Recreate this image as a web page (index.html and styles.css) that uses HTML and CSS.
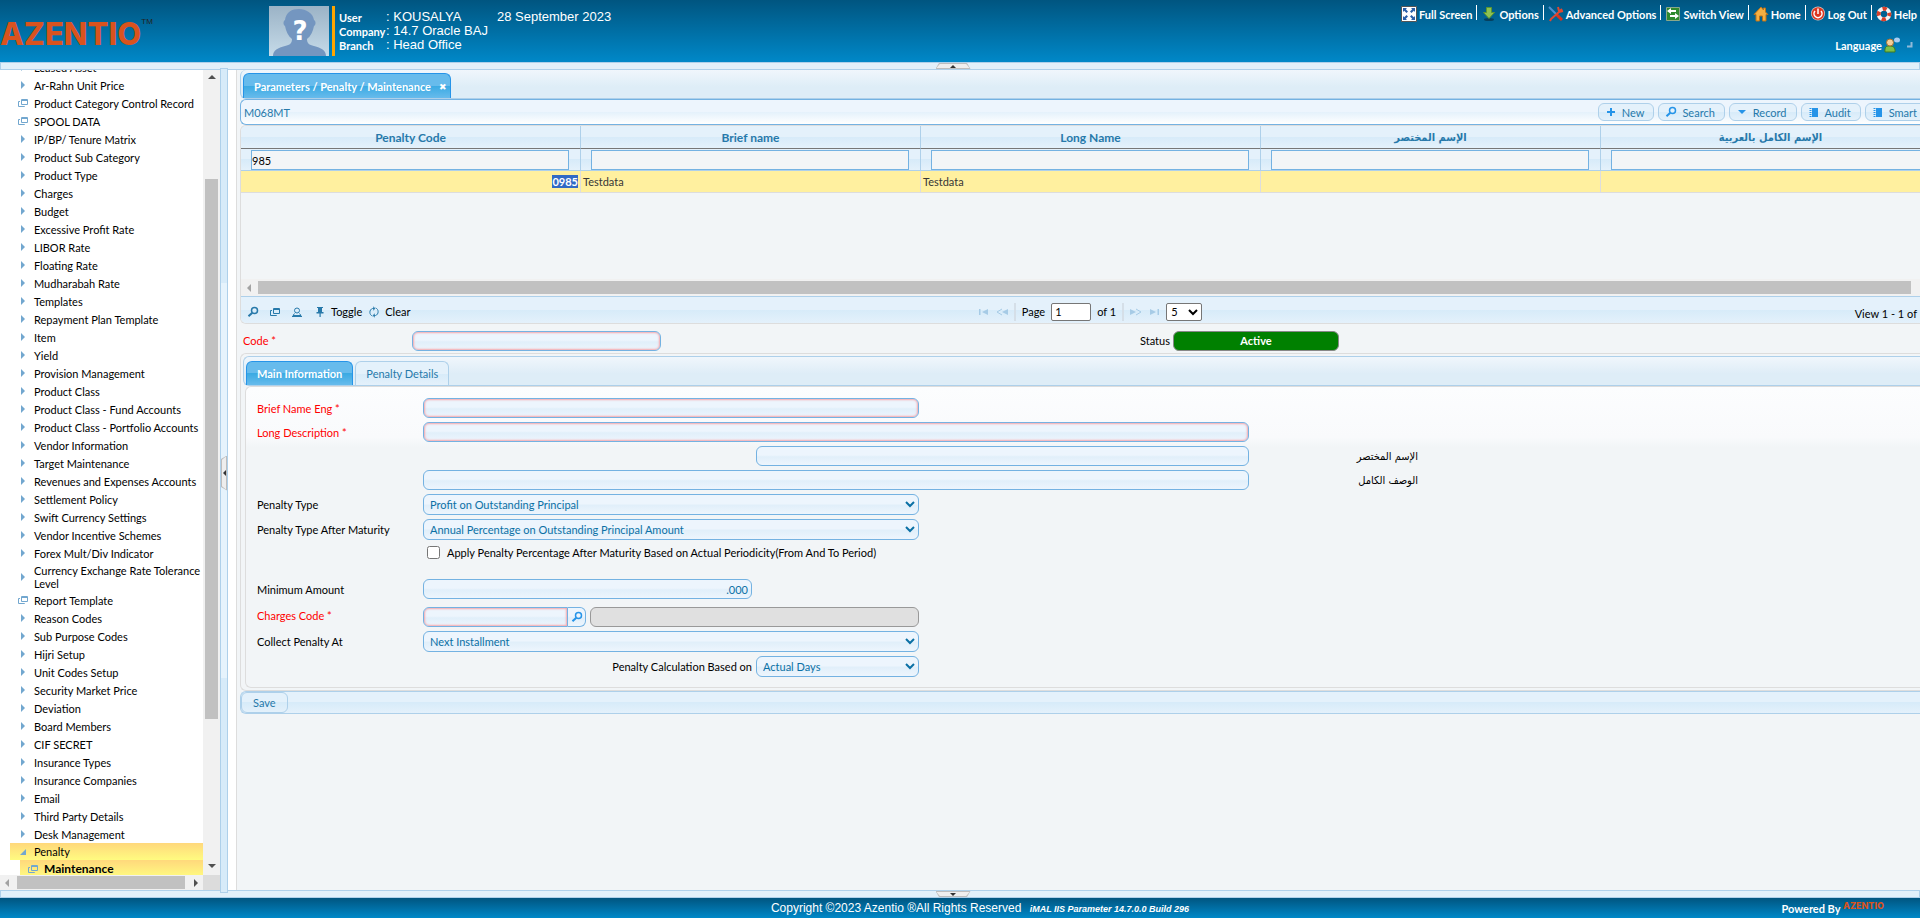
FILE: index.html
```html
<!DOCTYPE html>
<html lang="en">
<head>
<meta charset="utf-8">
<title>iMAL IIS Parameter - Penalty Maintenance</title>
<link rel="stylesheet" href="styles.css">
</head>
<body>
<svg class="sprite" aria-hidden="true">
  <symbol id="i-arrow" viewBox="0 0 10 10"><path d="M3 1v8l4-4z" fill="currentColor"/></symbol>
  <symbol id="i-open" viewBox="0 0 10 10"><path d="M8 2v6H2z" fill="currentColor"/></symbol>
  <symbol id="i-win" viewBox="0 0 10 10"><path d="M3.500 1.500h6v5h-6zM3.500 2.500h6M2 3.500H.5v5h6V8" fill="none" stroke="currentColor"/></symbol>
  <symbol id="i-search" viewBox="0 0 12 12"><circle cx="7.500" cy="4.500" r="3" fill="none" stroke="currentColor" stroke-width="1.500"/><path d="M5.300 6.700L1.500 10.300" stroke="currentColor" stroke-width="2"/></symbol>
  <symbol id="i-plus" viewBox="0 0 12 12"><path d="M6 2v8M2 6h8" stroke="currentColor" stroke-width="2"/></symbol>
  <symbol id="i-down" viewBox="0 0 12 12"><path d="M2 4h8L6 8z" fill="currentColor"/></symbol>
  <symbol id="i-book" viewBox="0 0 12 12"><path d="M4 2h6v9H4z" fill="currentColor"/><path d="M2.500 2v9" stroke="currentColor" stroke-width="2" stroke-dasharray="1 1"/></symbol>
  <symbol id="i-person" viewBox="0 0 12 12"><circle cx="6" cy="4.500" r="2.500" fill="none" stroke="currentColor"/><path d="M3.500 7.500L2 9.500h8L8.500 7.500M1 10.500h10" fill="none" stroke="currentColor"/></symbol>
  <symbol id="i-pin" viewBox="0 0 12 12"><path d="M3 1h6v1H8v4h1.500v1.500H2.500V6H4V2H3zM5.500 7.500h1.200V11H5.500z" fill="currentColor"/></symbol>
  <symbol id="i-refresh" viewBox="0 0 12 12"><path d="M4.500 10C1 9 1 3.500 4.500 2.500h2M7.500 2c3.500 1 3.500 6.500 0 7.500h-2M5 .8l2 1.700-2 1.700M7 7.800L5 9.500l2 1.700" fill="none" stroke="currentColor"/></symbol>
  <symbol id="i-first" viewBox="0 0 12 10"><path d="M1 2h1.500v6H1zM10 2v6L4 5z" fill="currentColor"/></symbol>
  <symbol id="i-prev" viewBox="0 0 12 10"><path d="M12 2v6L6 5z" fill="currentColor"/><path d="M6 2L1 5l5 3" fill="none" stroke="currentColor"/></symbol>
</svg>

<header class="top">
  <div class="logo">AZENTIO<sup>TM</sup></div>
  <svg class="photo" viewBox="0 0 60 50" role="img" aria-label="User photo">
    <defs><linearGradient id="pg" x1="0" y1="0" x2="0" y2="1"><stop offset="0" stop-color="#9bb3c6"/><stop offset="1" stop-color="#c6dbe9"/></linearGradient></defs>
    <path fill="url(#pg)" d="M0 0h60v50H0z"/>
    <path fill="#7496c0" d="M4 50c0-6 5-8 12-10 5-1 7-3 7-7-4-3-6-8-7-13-2-1-2-5 0-6C17 6 23 3 30 3s14 4 15 11c2 1 2 5 0 6-1 5-3 10-7 13 0 4 2 6 7 7 7 2 12 4 12 10z"/>
    <text x="31" y="34" text-anchor="middle" class="qmark">?</text>
  </svg>
  <dl class="user">
    <dt>User</dt><dd>: KOUSALYA</dd>
    <dt>Company</dt><dd>: 14.7 Oracle BAJ</dd>
    <dt>Branch</dt><dd>: Head Office</dd>
  </dl>
  <div class="date">28 September 2023</div>
  <nav class="links">
    <ul>
      <li><a href="#"><svg viewBox="0 0 16 16"><path fill="#fff" stroke="#555" d="M.5.5h15v15H.5z"/><path fill="#2a5fa8" d="M2 2h4L4.800 3.200 7 5.500 5.500 7 3.200 4.800 2 6zM14 2v4l-1.200-1.200L10.500 7 9 5.500l2.200-2.300L10 2zM2 14v-4l1.200 1.200L5.500 9 7 10.500l-2.200 2.300L6 14zM14 14h-4l1.200-1.200L9 10.500 10.500 9l2.300 2.200L14 10z"/></svg>Full Screen</a></li>
      <li><a href="#"><svg viewBox="0 0 16 16"><ellipse cx="8" cy="13.500" rx="5" ry="1.500" fill="#06405f"/><path fill="#8cc152" stroke="#5c9530" d="M5.500 1.500h5v5h3L8 12.500 2.500 6.500h3z"/></svg>Options</a></li>
      <li><a href="#"><svg viewBox="0 0 16 16"><path stroke="#4c8fd0" stroke-width="2" d="M1 1l7 7"/><path stroke="#d8321e" stroke-width="3" d="M8 8l6 6"/><path stroke="#e2472f" stroke-width="2" fill="none" d="M14 3l-3 3-8 7-1 2M10 1l1 4M15 5l-4 1"/></svg>Advanced Options</a></li>
      <li><a href="#"><svg viewBox="0 0 16 16"><path fill="#2f8a2f" stroke="#8aa88a" d="M1.500 1.500h13v13h-13z"/><path fill="#fff" d="M2 5l4-3v2h5v2H6v2zM14 10l-4 3v-2H5V9h5V7z"/></svg>Switch View</a></li>
      <li><a href="#"><svg viewBox="0 0 16 16"><path fill="#f5b042" stroke="#b8721b" d="M8 1L1 8.500h2V15h3.500v-5h3v5H13V8.500h2L12.500 6V2h-2v2z"/></svg>Home</a></li>
      <li><a href="#"><svg viewBox="0 0 16 16"><circle cx="8" cy="7.500" r="7" fill="#d9c8c4"/><circle cx="8" cy="7.500" r="6.300" fill="#dc3620"/><path d="M5 5a4 4 0 1 0 6 0M8 2.500V8" fill="none" stroke="#fff" stroke-width="1.500"/></svg>Log Out</a></li>
      <li><a href="#"><svg viewBox="0 0 16 16"><circle cx="8" cy="8" r="5.300" fill="none" stroke="#f4f4f4" stroke-width="4"/><circle cx="8" cy="8" r="5.300" fill="none" stroke="#d8402a" stroke-width="4" stroke-dasharray="4.160 4.160" stroke-dashoffset="2.080"/></svg>Help</a></li>
    </ul>
    <a class="lang" href="#">Language<svg viewBox="0 0 16 16"><path fill="#7cc04b" stroke="#3f7d22" d="M1 15c-.5-5 1-6 4.500-6S11.500 10 11 15z"/><circle cx="6" cy="5.500" r="3.500" fill="#f4cf9a" stroke="#a9702c"/><ellipse cx="13" cy="3" rx="3" ry="2.500" fill="#a9cdf2"/></svg><svg class="corner" viewBox="0 0 6 6"><path d="M4.500 0v4.500H0" fill="none" stroke="#8fb9d8" stroke-width="2"/></svg></a>
  </nav>
</header>

<div class="split-h"><button class="grip up" aria-label="Collapse header"></button></div>

<div class="middle">
  <aside class="side">
    <nav class="tree">
      <ul>
        <li><svg><use href="#i-arrow"/></svg><a href="#">Leased Asset</a></li>
        <li><svg><use href="#i-arrow"/></svg><a href="#">Ar-Rahn Unit Price</a></li>
        <li><svg><use href="#i-win"/></svg><a href="#">Product Category Control Record</a></li>
        <li><svg><use href="#i-win"/></svg><a href="#">SPOOL DATA</a></li>
        <li><svg><use href="#i-arrow"/></svg><a href="#">IP/BP/ Tenure Matrix</a></li>
        <li><svg><use href="#i-arrow"/></svg><a href="#">Product Sub Category</a></li>
        <li><svg><use href="#i-arrow"/></svg><a href="#">Product Type</a></li>
        <li><svg><use href="#i-arrow"/></svg><a href="#">Charges</a></li>
        <li><svg><use href="#i-arrow"/></svg><a href="#">Budget</a></li>
        <li><svg><use href="#i-arrow"/></svg><a href="#">Excessive Profit Rate</a></li>
        <li><svg><use href="#i-arrow"/></svg><a href="#">LIBOR Rate</a></li>
        <li><svg><use href="#i-arrow"/></svg><a href="#">Floating Rate</a></li>
        <li><svg><use href="#i-arrow"/></svg><a href="#">Mudharabah Rate</a></li>
        <li><svg><use href="#i-arrow"/></svg><a href="#">Templates</a></li>
        <li><svg><use href="#i-arrow"/></svg><a href="#">Repayment Plan Template</a></li>
        <li><svg><use href="#i-arrow"/></svg><a href="#">Item</a></li>
        <li><svg><use href="#i-arrow"/></svg><a href="#">Yield</a></li>
        <li><svg><use href="#i-arrow"/></svg><a href="#">Provision Management</a></li>
        <li><svg><use href="#i-arrow"/></svg><a href="#">Product Class</a></li>
        <li><svg><use href="#i-arrow"/></svg><a href="#">Product Class - Fund Accounts</a></li>
        <li><svg><use href="#i-arrow"/></svg><a href="#">Product Class - Portfolio Accounts</a></li>
        <li><svg><use href="#i-arrow"/></svg><a href="#">Vendor Information</a></li>
        <li><svg><use href="#i-arrow"/></svg><a href="#">Target Maintenance</a></li>
        <li><svg><use href="#i-arrow"/></svg><a href="#">Revenues and Expenses Accounts</a></li>
        <li><svg><use href="#i-arrow"/></svg><a href="#">Settlement Policy</a></li>
        <li><svg><use href="#i-arrow"/></svg><a href="#">Swift Currency Settings</a></li>
        <li><svg><use href="#i-arrow"/></svg><a href="#">Vendor Incentive Schemes</a></li>
        <li><svg><use href="#i-arrow"/></svg><a href="#">Forex Mult/Div Indicator</a></li>
        <li class="wrap"><svg><use href="#i-arrow"/></svg><a href="#">Currency Exchange Rate Tolerance Level</a></li>
        <li><svg><use href="#i-win"/></svg><a href="#">Report Template</a></li>
        <li><svg><use href="#i-arrow"/></svg><a href="#">Reason Codes</a></li>
        <li><svg><use href="#i-arrow"/></svg><a href="#">Sub Purpose Codes</a></li>
        <li><svg><use href="#i-arrow"/></svg><a href="#">Hijri Setup</a></li>
        <li><svg><use href="#i-arrow"/></svg><a href="#">Unit Codes Setup</a></li>
        <li><svg><use href="#i-arrow"/></svg><a href="#">Security Market Price</a></li>
        <li><svg><use href="#i-arrow"/></svg><a href="#">Deviation</a></li>
        <li><svg><use href="#i-arrow"/></svg><a href="#">Board Members</a></li>
        <li><svg><use href="#i-arrow"/></svg><a href="#">CIF SECRET</a></li>
        <li><svg><use href="#i-arrow"/></svg><a href="#">Insurance Types</a></li>
        <li><svg><use href="#i-arrow"/></svg><a href="#">Insurance Companies</a></li>
        <li><svg><use href="#i-arrow"/></svg><a href="#">Email</a></li>
        <li><svg><use href="#i-arrow"/></svg><a href="#">Third Party Details</a></li>
        <li><svg><use href="#i-arrow"/></svg><a href="#">Desk Management</a></li>
        <li class="hot"><svg><use href="#i-open"/></svg><a href="#">Penalty</a></li>
        <li class="hot leaf"><svg><use href="#i-win"/></svg><a href="#">Maintenance</a></li>
      </ul>
    </nav>
    <div class="sb-v"><span class="tri up"></span><span class="thumb"></span><span class="tri down"></span></div>
    <div class="sb-h"><span class="tri left"></span><span class="thumb"></span><span class="tri right"></span></div>
    <div class="sb-c"></div>
  </aside>
  <div class="split-v"><button class="grip west" aria-label="Collapse menu"></button></div>

  <main class="content">
    <div class="tabbar"><a class="tab on" href="#">Parameters / Penalty / Maintenance<span class="x">✖</span></a></div>
    <div class="toolbar">
      <span>M068MT</span>
      <div class="tools">
        <button><svg><use href="#i-plus"/></svg>New</button>
        <button><svg><use href="#i-search"/></svg>Search</button>
        <button><svg><use href="#i-down"/></svg>Record</button>
        <button><svg><use href="#i-book"/></svg>Audit</button>
        <button><svg><use href="#i-book"/></svg>Smart</button>
      </div>
    </div>

    <section class="gridbox">
      <div class="gridview">
        <table>
          <thead>
            <tr><th>Penalty Code</th><th>Brief name</th><th>Long Name</th><th class="ar">الإسم المختصر</th><th class="ar">الإسم الكامل بالعربية</th></tr>
            <tr class="filter">
              <td><input aria-label="Penalty Code filter" value="985"></td>
              <td><input aria-label="Brief name filter"></td>
              <td><input aria-label="Long Name filter"></td>
              <td><input aria-label="Arabic brief name filter"></td>
              <td><input aria-label="Arabic long name filter"></td>
            </tr>
          </thead>
          <tbody><tr><td class="num"><mark>0985</mark></td><td>Testdata</td><td>Testdata</td><td></td><td></td></tr></tbody>
        </table>
      </div>
      <div class="grid-sb"><span class="tri left"></span><span class="thumb"></span></div>
      <div class="pager">
        <div class="acts">
          <button aria-label="Find"><svg><use href="#i-search"/></svg></button>
          <button aria-label="Columns"><svg class="win"><use href="#i-win"/></svg></button>
          <button aria-label="User"><svg><use href="#i-person"/></svg></button>
          <button><svg><use href="#i-pin"/></svg>Toggle</button>
          <button><svg><use href="#i-refresh"/></svg>Clear</button>
        </div>
        <div class="pages">
          <svg><use href="#i-first"/></svg><svg><use href="#i-prev"/></svg><i></i>
          <label for="pg-no">Page</label><input id="pg-no" value="1"><span>of 1</span><i></i>
          <svg class="flip"><use href="#i-prev"/></svg><svg class="flip"><use href="#i-first"/></svg>
          <select aria-label="Rows per page"><option>5</option></select>
        </div>
        <div class="view">View 1 - 1 of</div>
      </div>
    </section>

    <div class="coderow">
      <label class="req" for="code">Code *</label>
      <input class="field must" id="code">
      <label class="status-l" for="status">Status</label>
      <output class="status" id="status">Active</output>
    </div>

    <section class="outer">
      <div class="tabbar inner"><a class="tab on" href="#">Main Information</a><a class="tab" href="#">Penalty Details</a></div>
      <form class="panel">
        <label class="req" for="bn">Brief Name Eng *</label><input id="bn" class="field must w2">
        <label class="req" for="ld">Long Description *</label><input id="ld" class="field must w3">
        <input id="bna" class="field c3 w2" dir="rtl"><label class="ar" for="bna">الإسم المختصر</label>
        <input id="lda" class="field c2 w3" dir="rtl"><label class="ar" for="lda">الوصف الكامل</label>
        <label for="pt">Penalty Type</label><select id="pt" class="field w2"><option>Profit on Outstanding Principal</option></select>
        <label for="pm">Penalty Type After Maturity</label><select id="pm" class="field w2"><option>Annual Percentage on Outstanding Principal Amount</option></select>
        <div class="check"><input type="checkbox" id="ap"><label for="ap">Apply Penalty Percentage After Maturity Based on Actual Periodicity(From And To Period)</label></div>
        <label for="ma">Minimum Amount</label><input id="ma" class="field amount" value=".000">
        <label class="req" for="cc">Charges Code *</label>
        <div class="lookup"><input id="cc" class="field must"><button type="button" aria-label="Look up charges code"><svg><use href="#i-search"/></svg></button><input class="field off" aria-label="Charges description" disabled></div>
        <label for="cp">Collect Penalty At</label><select id="cp" class="field w2"><option>Next Installment</option></select>
        <label class="calc" for="pc">Penalty Calculation Based on</label><select id="pc" class="field"><option>Actual Days</option></select>
      </form>
    </section>
    <div class="savebar"><button>Save</button></div>
  </main>
</div>

<div class="split-h"><button class="grip down" aria-label="Collapse footer"></button></div>
<footer class="bottom">
  <div class="copy">Copyright ©2023 Azentio ®All Rights Reserved <em>iMAL IIS Parameter 14.7.0.0 Build 296</em></div>
  <div class="powered">Powered By <span>AZENTIO</span></div>
</footer>
</body>
</html>
```
FILE: styles.css
```css
* { box-sizing: border-box; }
:root {
  --line: #aed0ea;
  --field: #74b2e2;
  --blue: #2779aa;
  --soft: linear-gradient(#e4f1fb 0 50%, #d7ebf9 50%, #e4f1fb);
  --input: linear-gradient(#edf5fd, #edf5fd 45%, #e1effa 55%, #edf5fd);
}
html, body { margin: 0; height: 100%; }
body {
  display: flex; flex-direction: column; overflow: hidden;
  background: #fff; color: #000;
  font: 11px/13px Lato, "DejaVu Sans", sans-serif;
}
input, select, button { font: inherit; color: inherit; margin: 0; }
button { background: none; border: 0; padding: 0; cursor: pointer; }
ul, dl, dd { margin: 0; padding: 0; list-style: none; }
a { color: inherit; text-decoration: none; }
.sprite { display: none; }

.top {
  display: flex; height: 62px; flex: none; color: #fff;
  background: linear-gradient(#005580, #0088c8);
}
.logo { width: 269px; padding-top: 14px; color: #d9531e; font: 800 31px/40px Inter, sans-serif; }
.logo sup { color: #222; font: 8px/0 "Liberation Sans", sans-serif; vertical-align: 21px; }
.photo { width: 60px; height: 50px; margin-top: 6px; }
.qmark { font: bold 26px "DejaVu Sans", sans-serif; fill: #fff; }
.user {
  display: grid; grid-template-columns: 47px auto; align-content: start;
  width: 165px; height: 50px; margin: 6px 0 0 3px; padding: 4px 0 0 4px; border-left: 3px solid orange;
}
.user dt { font-weight: bold; line-height: 16px; height: 14px; }
.user dd, .date { font: 13px/14px "Liberation Sans", sans-serif; white-space: nowrap; }
.date { padding-top: 10px; }
.links { margin-left: auto; padding: 5px 3px 0 0; font-weight: bold; }
.links ul { display: flex; }
.links li { padding-right: 4px; margin-right: 4px; }
.links li:not(:last-child) { border-right: 1px solid #fff; height: 15px; }
.links li:last-child { margin: 0; padding: 0; }
.links a { display: flex; align-items: center; gap: 2px; height: 18px; white-space: nowrap; }
.links svg { width: 16px; height: 16px; flex: none; }
.links .lang { justify-content: flex-end; margin-top: 13px; padding-right: 4px; }
.links .corner { width: 6px; height: 6px; margin-left: 5px; }

.split-h { flex: none; height: 8px; border: 1px solid var(--line); background: #e1f0fa; display: flex; justify-content: center; padding-right: 14px; }
.grip { position: relative; background: #bdbdbd; border: 0; display: grid; place-items: center; }
.grip::after { content: ""; position: absolute; inset: 1px; background: #eee; clip-path: inherit; }
.grip.up, .grip.down { width: 35px; height: 6px; }
.grip.up { clip-path: polygon(10% 0, 90% 0, 100% 100%, 0 100%); }
.grip.down { clip-path: polygon(0 0, 100% 0, 90% 100%, 10% 100%); }
.grip::before, .tri { content: ""; width: 0; height: 0; border: 3px solid transparent; flex: none; }
.grip::before { z-index: 1; }
.grip.up::before { border-bottom-color: #333; border-top: 0; }
.grip.down::before { border-top-color: #333; border-bottom: 0; }
.grip.west::before { border-right-color: #333; border-left: 0; }
.tri { border-width: 4px; }
.tri.up { border-bottom-color: #505050; border-top: 0; }
.tri.down { border-top-color: #505050; border-bottom: 0; }
.tri.left { border-right-color: #a3a3a3; border-left: 0; }
.tri.right { border-left-color: #505050; border-right: 0; }

.middle { flex: 1; min-height: 0; display: flex; }
.side { width: 220px; flex: none; display: grid; grid-template: minmax(0, 1fr) 15px / 203px 17px; }
.tree { overflow: hidden; }
.tree ul { margin-top: -12px; }
.tree li { display: flex; align-items: center; min-height: 18px; padding-left: 18px; white-space: nowrap; }
.tree li.wrap { height: 29px; white-space: normal; }
.tree svg { width: 10px; height: 10px; flex: none; margin-right: 6px; color: #72a7cf; }
.tree .hot { margin-left: 10px; padding-left: 8px; min-height: 17px; background: linear-gradient(#ffd87c, #fffb80); }
.tree .leaf { margin-left: 20px; font-weight: bold; font-size: 12px; }
.sb-v { background: #f1f1f1; display: flex; flex-direction: column; align-items: center; padding: 5px 0 7px; }
.sb-v .thumb { width: 13px; height: 540px; margin-top: 100px; margin-bottom: auto; background: #c1c1c1; }
.sb-h { background: #f1f1f1; display: flex; align-items: center; padding: 0 5px; }
.sb-h .thumb { flex: 1; height: 13px; margin: 0 9px 0 8px; background: #c1c1c1; }
.sb-c { background: #dcdcdc; }
.split-v {
  width: 8px; flex: none; margin: -2px 0 -3px; padding-bottom: 15px; z-index: 1; border: 1px solid var(--line); display: flex; align-items: center;
  background: linear-gradient(#d7ebf9 0 26%, #e6f3fc 26% 74%, #d7ebf9 74%);
}
.grip.west { width: 6px; height: 35px; clip-path: polygon(0 10%, 100% 0, 100% 100%, 0 90%); }

.content { flex: 1; min-width: 0; margin-left: 8px; padding-left: 3px; border-left: 1px solid #ddd; background: #f2f5f7; overflow: hidden; }
.tabbar {
  display: flex; gap: 2px; height: 29px; padding: 3px 0 0 2px;
  border: 1px solid var(--line); border-width: 0 0 1px 1px; border-radius: 6px 0 0 6px;
  background: linear-gradient(#f0f6fc, #deedf7 60%);
}
.tab {
  display: flex; align-items: center; padding: 0 10px; color: var(--blue); background: var(--soft);
  border: 1px solid var(--line); border-bottom: 0; border-radius: 6px 6px 0 0; white-space: nowrap;
}
.tab.on { color: #fff; font-weight: bold; border-color: #2694e8; background: linear-gradient(#67bbec 0 50%, #3baae3 50%, #67bbec); }
.tab .x { margin-left: 8px; margin-right: -7px; font-size: 9px; }
.toolbar {
  display: flex; align-items: center; justify-content: space-between; height: 26px; padding-left: 3px; overflow: hidden;
  border: 1px solid var(--field); border-right: 0; border-radius: 6px 0 0 6px; color: var(--blue);
  background: linear-gradient(#edf5fd 0 50%, #e4f1fb 50%, #fff);
}
.tools { display: flex; gap: 4px; margin-right: -7px; }
.tools button {
  display: flex; align-items: center; gap: 5px; height: 18px; padding: 0 9px 0 6px;
  border: 1px solid var(--line); border-radius: 6px; background: var(--soft);
}
.tools svg { width: 12px; height: 12px; color: #2694e8; }

.gridbox { border: 1px solid #ddd; border-right: 0; border-radius: 6px 0 0 6px; overflow: hidden; }
.gridview { height: 153px; overflow: hidden; }
table { width: 1700px; table-layout: fixed; border-collapse: separate; border-spacing: 0; }
th { height: 23px; padding: 0; color: var(--blue); font-size: 12px; font-weight: bold; background: var(--soft); border-right: 1px solid var(--line); border-bottom: 1px solid #777; }
th.ar, .ar { font-family: "DejaVu Sans Condensed", "DejaVu Sans", sans-serif; font-size: 11px; }
.filter td { height: 22px; padding: 1px 11px 0 10px; background: var(--soft); border-right: 1px solid var(--line); border-bottom: 1px solid var(--line); }
.filter input { display: block; width: 100%; height: 20px; padding: 0; border: 1px solid var(--field); background: #f2f5f7; }
tbody td { height: 22px; padding: 0 2px; background: #fff09f; color: #363636; border-right: 1px solid #ddd; border-bottom: 1px solid #ddd; }
.num { text-align: right; }
mark { display: inline-block; background: #316ac5; color: #fff; font-weight: bold; }
.grid-sb { display: flex; align-items: center; height: 17px; padding: 0 9px 0 6px; background: #f1f1f1; }
.grid-sb .thumb { flex: 1; height: 13px; margin-left: 7px; background: #c1c1c1; }
.pager {
  display: grid; grid-template-columns: 1fr auto 1fr; align-items: center; height: 27px; padding: 3px 3px 0 6px;
  background: var(--soft); border-top: 1px solid var(--line);
}
.pager svg { width: 12px; height: 12px; color: var(--blue); }
.pager .win { width: 10px; height: 10px; }
.acts { display: flex; gap: 11px; }
.acts button { display: flex; align-items: center; gap: 5px; }
.acts button:last-child { margin-left: -5px; }
.pages { display: flex; align-items: center; gap: 6px; margin-left: 16px; }
.pager .pages svg { height: 10px; color: #a6cbe6; }
.pages .flip { transform: scaleX(-1); }
.pages i { width: 2px; height: 18px; background: #d5dfe8; }
.pages input { width: 40px; height: 18px; padding: 0 3px; border: 1px solid #767676; border-radius: 2px; background: #fff; }
.pages select { width: 36px; height: 18px; border: 1px solid #767676; border-radius: 2px; background: #fff; }
.view { text-align: right; padding-top: 4px; }

.coderow { display: grid; grid-template-columns: 169fr 249fr 479fr 33fr 166fr 581fr; align-items: center; height: 29px; padding: 4px 0 0 3px; }
.req { color: #f00; }
.status-l { grid-column: 4; }
.status { height: 20px; line-height: 18px; text-align: center; color: #fff; font-weight: bold; background: green; border: 1px solid #888; border-radius: 6px; }
.field { width: 100%; min-width: 0; height: 20px; padding: 0 3px; color: #0b70a5; background: var(--input); border: 1px solid var(--field); border-radius: 6px; }
select.field { height: 21px; padding: 0 2px; }
.must { box-shadow: inset 0 0 2px 1px #f6a6ac; }

.outer { border: 1px solid #ddd; border-right: 0; border-radius: 6px 0 0 6px; padding: 2px 0 2px 2px; }
.inner { height: 30px; padding: 4px 0 0 2px; border-top-width: 1px; }
.panel {
  display: grid; grid-template-columns: 166fr 333fr 163fr 330fr 169fr 502fr; align-items: center; row-gap: 4px;
  margin-left: 2px; padding: 11px 0 10px 11px;
  border: 1px solid #ddd; border-right: 0; border-radius: 6px 0 0 6px;
  background: linear-gradient(#fcfdfe, #f9fafc 50px, #f2f5f7 60px);
}
.panel > label:not(.ar):not(.calc) { grid-column: 1; }
.w2 { grid-column: span 2; }
.w3 { grid-column: span 3; }
.c3.w2 { grid-column: 3 / span 2; }
.c2.w3 { grid-column: 2 / span 3; }
.panel .ar { grid-column: 5; text-align: right; }
.check { grid-column: 2 / span 3; display: flex; align-items: center; gap: 7px; padding-left: 4px; height: 16px; margin-bottom: 15px; }
.check input { width: 13px; height: 13px; }
.amount { text-align: right; width: calc(100% - 4px); }
.lookup { grid-column: 2 / span 2; display: grid; grid-template-columns: 145fr 18fr 4fr 329fr; margin-top: 4px; }
.lookup .must { border-radius: 6px 0 0 6px; }
.lookup button { display: grid; place-items: center; border: 1px solid var(--field); border-left: 0; border-radius: 0 6px 6px 0; background: var(--input); }
.lookup svg { width: 12px; height: 12px; color: #2694e8; }
.lookup .off { grid-column: 4; background: #e0e0e0; border-color: #999; }
.calc { grid-column: 2; text-align: right; padding-right: 4px; }
.savebar { height: 23px; border: 1px solid var(--line); border-right: 0; border-radius: 6px 0 0 6px; background: var(--soft); }
.savebar button { height: 21px; padding: 0 11px; color: var(--blue); border: 1px solid var(--line); border-radius: 6px; background: var(--soft); }

.bottom { display: grid; grid-template-columns: 1fr auto 1fr; align-items: center; height: 20px; flex: none; color: #fff; background: linear-gradient(#005580, #0088c8); }
.copy { grid-column: 2; margin-left: 40px; font: 12px/20px "Liberation Sans", sans-serif; }
.copy em { margin-left: 5px; font-size: 9px; font-weight: bold; }
.powered { justify-self: end; padding-right: 36px; font-weight: bold; }
.powered span { color: #d9531e; font: 800 9px/8px Inter, sans-serif; vertical-align: 4px; }
```
